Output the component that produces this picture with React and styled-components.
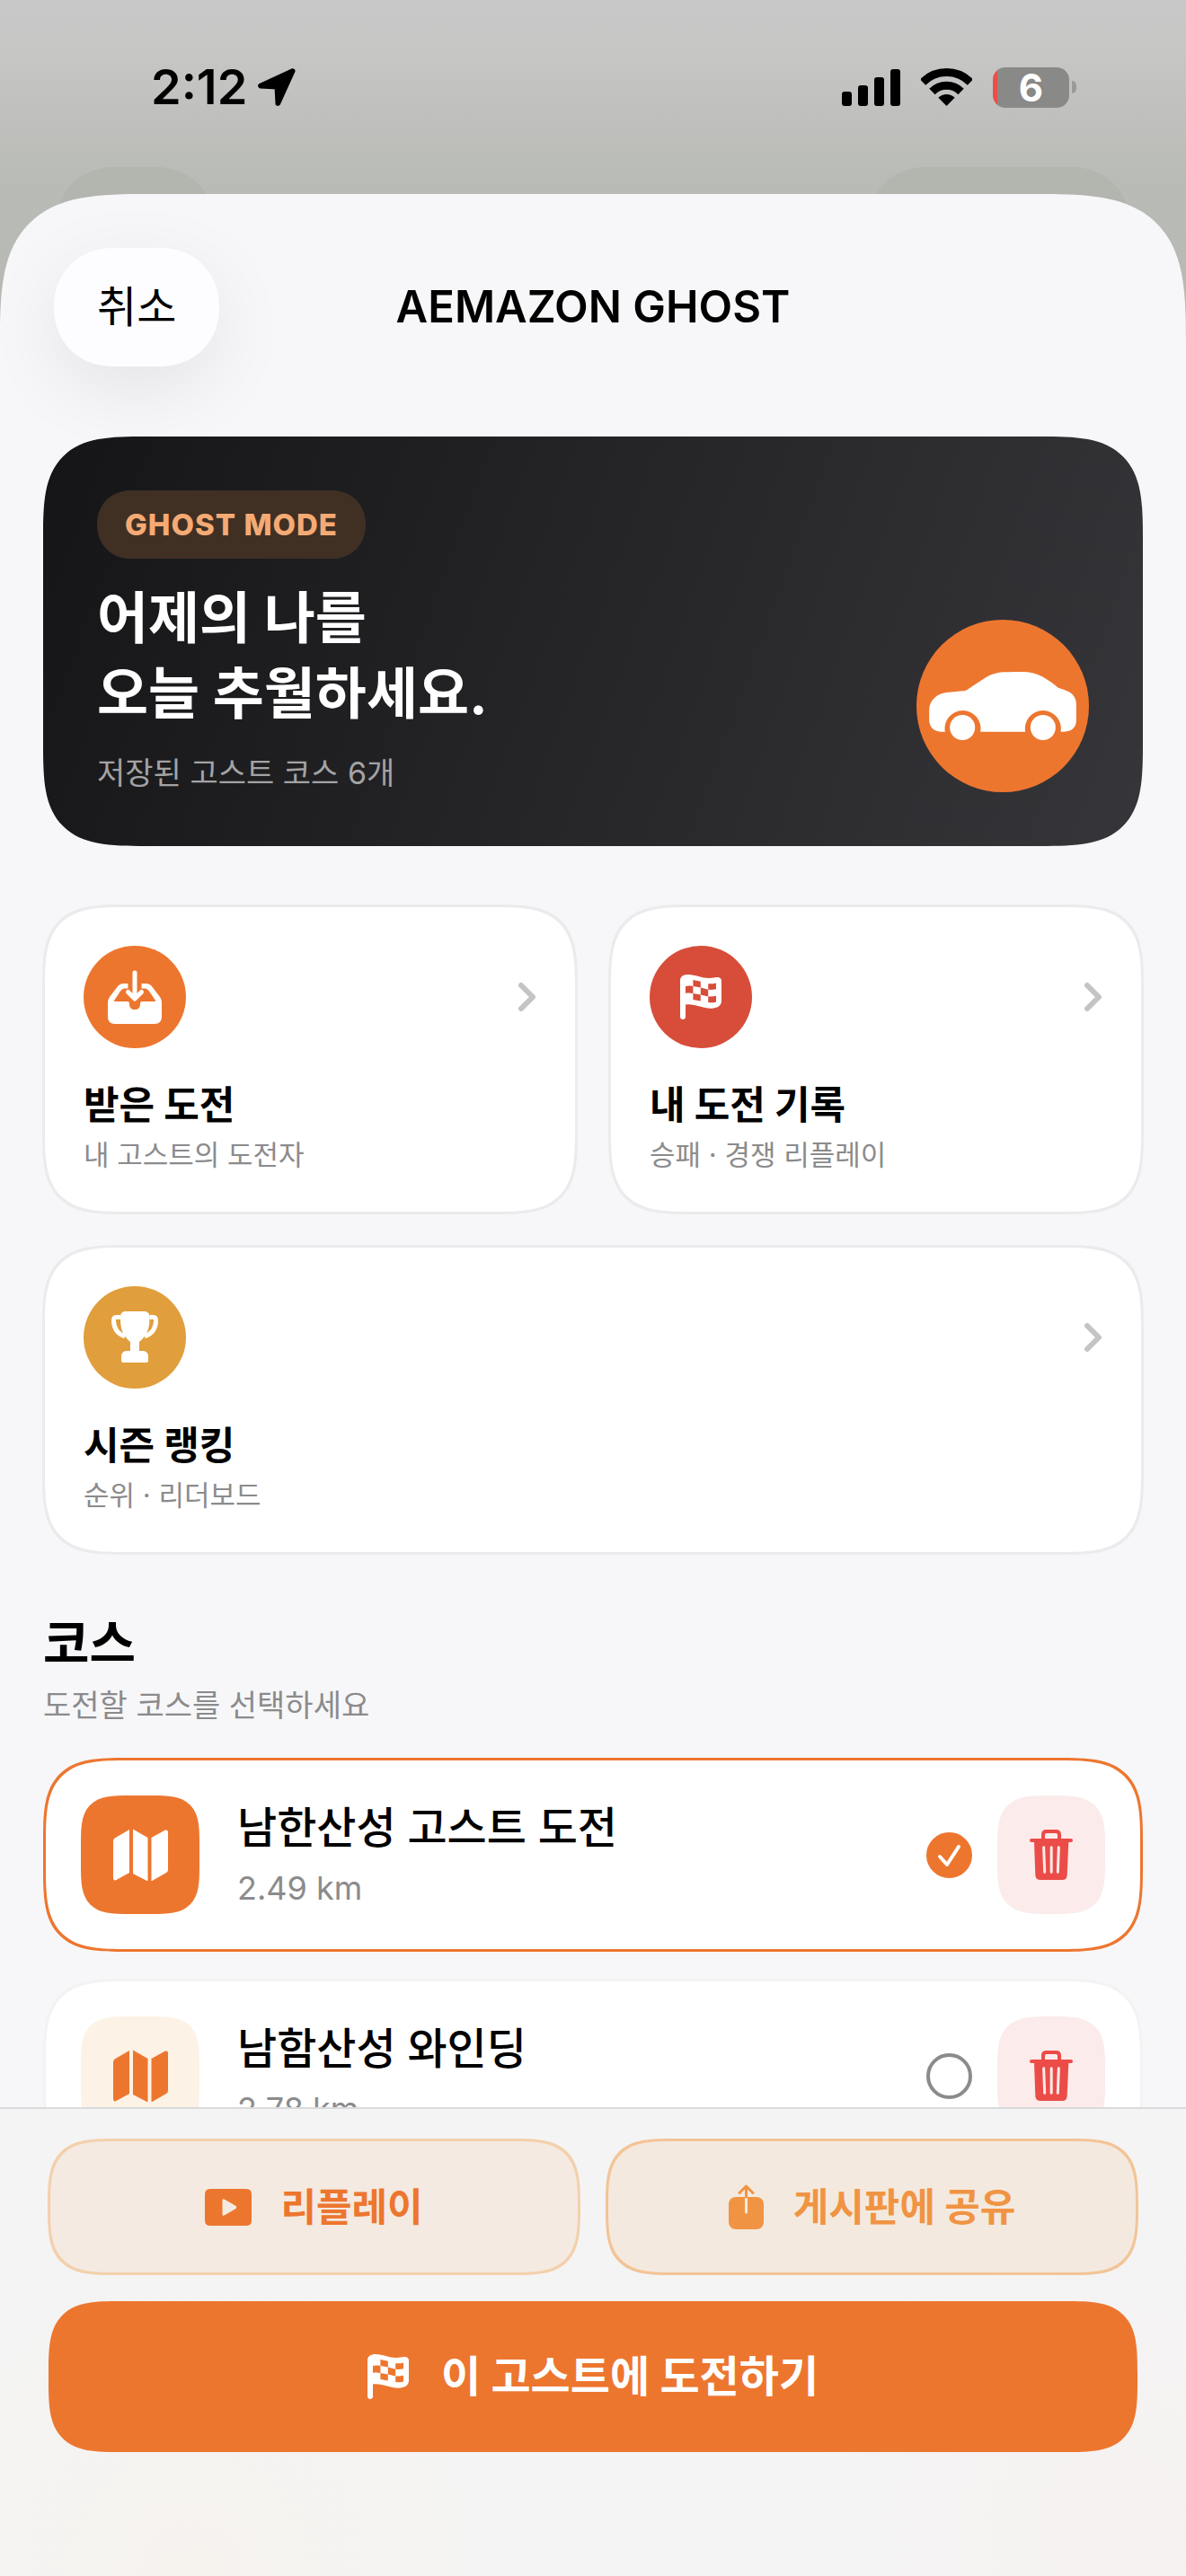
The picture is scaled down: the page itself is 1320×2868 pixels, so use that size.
import React, { useState } from "react";
import styled, { createGlobalStyle, css } from "styled-components";

const FLAG_PATH =
    "M35 40C35 35 39 33 44 33C52 33 60 37.5 68 37C71 36.8 73 36.5 76 36C79 36 81 37.5 81 40V62C81 67 78 69.5 72 70.5C62 72 52 65 41 66.5V80C41 84 35 84 35 80Z" +
    "M49.4 39V46C46 45.3 44 45.4 41 46V53.8C44 53.3 46 53.3 49.4 54V61L57.8 62.5V55.5L66.2 57.5V64C69 64.6 72 64.4 75 63.5V56.8C72 57.5 69 57.8 66.2 57.5V49.8C69 50 72 50 75 49.2V42.5C72 43.3 69 43.5 66.2 43.2V49.8L57.8 47.5V40.8ZM49.4 46L57.8 47.5V55.5L49.4 54Z";

const actions = [
    { id: "inbox", title: "받은 도전", note: "내 고스트의 도전자", color: "#ed762f", icon: <TrayIcon /> },
    { id: "history", title: "내 도전 기록", note: "승패 · 경쟁 리플레이", color: "#d74d3a", icon: <FlagIcon /> },
    { id: "ranking", title: "시즌 랭킹", note: "순위 · 리더보드", color: "#e19e3c", icon: <TrophyIcon />, wide: true },
];

const courses = [
    { id: "c1", name: "남한산성 고스트 도전", distance: "2.49 km" },
    { id: "c2", name: "남함산성 와인딩", distance: "2.78 km" },
];

function App() {
    const [selected, setSelected] = useState("c1");

    return (
        <Screen>
            <GlobalStyle />
            <StatusBar>
                <StatusGroup>
                    <Clock>2:12</Clock>
                    <LocationIcon />
                </StatusGroup>
                <StatusGroup $gap="23px">
                    <SignalIcon />
                    <WifiIcon />
                    <Battery>
                        <BatteryLevel>6</BatteryLevel>
                        <BatteryTip />
                    </Battery>
                </StatusGroup>
                <BackPills>
                    <BackPill $width="177px" />
                    <BackPill $width="292px" />
                </BackPills>
            </StatusBar>

            <Sheet>
                <SheetHeader>
                    <CancelButton type="button">취소</CancelButton>
                    <SheetTitle>AEMAZON GHOST</SheetTitle>
                </SheetHeader>

                <ScrollArea>
                    <Hero>
                        <HeroText>
                            <Badge>GHOST MODE</Badge>
                            <HeroTitle>
                                어제의 나를
                                <br />
                                오늘 추월하세요.
                            </HeroTitle>
                            <HeroNote>저장된 고스트 코스 6개</HeroNote>
                        </HeroText>
                        <CarCircle>
                            <CarIcon />
                        </CarCircle>
                    </Hero>

                    <ActionGrid>
                        {actions.map((action) => (
                            <ActionCard key={action.id} type="button" $wide={action.wide}>
                                <ActionTop>
                                    <ActionIcon $color={action.color}>{action.icon}</ActionIcon>
                                    <ChevronIcon />
                                </ActionTop>
                                <ActionTitle>{action.title}</ActionTitle>
                                <ActionNote>{action.note}</ActionNote>
                            </ActionCard>
                        ))}
                    </ActionGrid>

                    <SectionTitle>코스</SectionTitle>
                    <SectionNote>도전할 코스를 선택하세요</SectionNote>

                    <CourseList>
                        {courses.map((course) => {
                            const active = course.id === selected;
                            return (
                                <CourseRow key={course.id} $active={active}>
                                    <CourseLabel htmlFor={course.id}>
                                        <MapTile $active={active}>
                                            <MapIcon />
                                        </MapTile>
                                        <CourseText>
                                            <CourseName>{course.name}</CourseName>
                                            <CourseDistance>{course.distance}</CourseDistance>
                                        </CourseText>
                                    </CourseLabel>
                                    <RadioWrap>
                                        <Radio
                                            type="radio"
                                            name="course"
                                            id={course.id}
                                            checked={active}
                                            onChange={() => setSelected(course.id)}
                                        />
                                        {active && <CheckIcon />}
                                    </RadioWrap>
                                    <DeleteButton type="button" aria-label="삭제">
                                        <TrashIcon />
                                    </DeleteButton>
                                </CourseRow>
                            );
                        })}
                    </CourseList>
                </ScrollArea>

                <BottomBar>
                    <ButtonPair>
                        <SoftButton type="button">
                            <PlayIcon />
                            리플레이
                        </SoftButton>
                        <SoftButton type="button" $light>
                            <ShareIcon />
                            게시판에 공유
                        </SoftButton>
                    </ButtonPair>
                    <MainButton type="button">
                        <FlagIcon />
                        이 고스트에 도전하기
                    </MainButton>
                </BottomBar>
            </Sheet>
        </Screen>
    );
}

export default App;

/* icons */

function LocationIcon() {
    return (
        <svg width="42" height="42" viewBox="408 51 126 126" aria-hidden="true">
            <path d="M524 60L417 110L472 113L475 168Z" fill="#000" stroke="#000" strokeWidth="17" strokeLinejoin="round" />
        </svg>
    );
}

function SignalIcon() {
    return (
        <svg width="65" height="41" viewBox="0 0 65 41" aria-hidden="true">
            <rect x="0" y="25" width="11" height="16" rx="3" />
            <rect x="18" y="18" width="11" height="23" rx="3" />
            <rect x="36" y="9" width="11" height="32" rx="3" />
            <rect x="54" y="0" width="11" height="41" rx="3" />
        </svg>
    );
}

function WifiIcon() {
    return (
        <svg width="57" height="42" viewBox="315 45 171 126" aria-hidden="true">
            <path d="M321 91.5A112.5 112.5 0 0 1 480 91.5M352.4 123A68 68 0 0 1 448.6 123" fill="none" stroke="#000" strokeWidth="27" />
            <path d="M400.5 171L373 143.4A39 39 0 0 1 428 143.4Z" />
        </svg>
    );
}

function CarIcon() {
    return (
        <svg width="164" height="76" viewBox="402 324 491 228" fill="#fff" aria-hidden="true">
            <path d="M402 452C402 420 428 396 460 393L522 387C530 385 536 379 545 373L584 347C604 335 625 326 650 325C675 324 700 324 720 324C742 325 760 330 778 339C800 351 820 366 833 377C845 381 857 384 869 391C885 400 893 415 893 432V487C893 510 877 524 852 524H841A60 60 0 1 0 723 524H573A60 60 0 1 0 455 524H440C418 524 402 508 402 484Z" />
            <circle cx="513" cy="510" r="42" />
            <circle cx="782" cy="510" r="42" />
        </svg>
    );
}

function TrayIcon() {
    return (
        <svg width="60" height="60" viewBox="26 27 60 60" aria-hidden="true">
            <path
                d="M48.5 42H44C40 42 38 43.5 36 46.5L28 57C26.5 59.5 26 61 26 64V79C26 84 29 87 34 87H78C83 87 86 84 86 79V64C86 61 85.5 59.5 84 57L76 46.5C74 43.5 72 42 68 42H63.5V47.5H67C69 47.5 70.5 48.5 72 50.5L79 61C79.3 61.7 79 62 78 62H64C62.5 62 62 63 62 65C62 69 59.5 71 56 71C52.5 71 50 69 50 65C50 63 49.5 62 48 62H34C33 62 32.7 61.7 33 61L40 50.5C41.5 48.5 43 47.5 45 47.5H48.5Z"
                fill="#fff"
            />
            <path d="M56 30V58M48.5 51.5L56 59L63.5 51.5" fill="none" stroke="#fff" strokeWidth="5" strokeLinecap="round" strokeLinejoin="round" />
        </svg>
    );
}

function FlagIcon() {
    return (
        <svg width="46" height="50" viewBox="35 33 46 50" aria-hidden="true">
            <path d={FLAG_PATH} fill="#fff" fillRule="evenodd" />
        </svg>
    );
}

function TrophyIcon() {
    return (
        <svg width="52" height="58" viewBox="31 29 52 58" aria-hidden="true">
            <path
                d="M41 36C41 31 43 29 47 29H67C71.5 29 73.5 31 73.5 36C73.5 50 70 56 62 63V73H66C70 73 72 76 72 79V84C72 85 71 86 70 86H44C43 86 42 85 42 84V79C42 76 44 73 48 73H52V63C44 56 41 50 41 36Z"
                fill="#fff"
            />
            <path
                d="M41 35.5H36.5C34 35.5 33.5 37 33.5 39C33.5 48 38 54 46 57M73.5 35.5H77.5C80 35.5 80.5 37 80.5 39C80.5 48 76 54 68 57"
                fill="none"
                stroke="#fff"
                strokeWidth="5"
            />
        </svg>
    );
}

function ChevronIcon() {
    return (
        <svg width="20" height="34" viewBox="0 0 20 34" aria-hidden="true">
            <path d="M3 4L16 17L3 30" fill="none" stroke="#c4c4c5" strokeWidth="6" strokeLinecap="round" strokeLinejoin="round" />
        </svg>
    );
}

function MapIcon() {
    return (
        <svg width="61" height="58" viewBox="35 37 61 58" fill="currentColor" aria-hidden="true">
            <path d="M53 38V86L38.5 94C36.5 95 35 94 35 92V51C35 49 36 48 37.5 47Z" />
            <path d="M57 37.5L73.5 47V95.5L57 87Z" />
            <path d="M77.5 47L92 39C94 38 96 38.5 96 41V82C96 84 95.5 85 94 86L77.5 95.5Z" />
        </svg>
    );
}

function CheckIcon() {
    return (
        <svg width="51" height="51" viewBox="0 0 51 51" aria-hidden="true">
            <path d="M15 27L23 36L36 16" fill="none" stroke="#fff" strokeWidth="4" strokeLinecap="round" strokeLinejoin="round" />
        </svg>
    );
}

function TrashIcon() {
    return (
        <svg width="48" height="56" viewBox="618 318 144 168" aria-hidden="true">
            <path d="M663 352V335Q663 324 674 324H706Q717 324 717 335V352" fill="none" stroke="#eb4c48" strokeWidth="12" />
            <rect x="618" y="348" width="144" height="12" rx="6" fill="#eb4c48" />
            <path d="M633 358H748L743 470Q742 486 727 486H654Q638 486 637 470Z" fill="#eb4c48" />
            <path d="M665 377L668 460M690.5 377V460M715 377L712 460" stroke="#fbebeb" strokeWidth="9" strokeLinecap="round" />
        </svg>
    );
}

function PlayIcon() {
    return (
        <svg width="52" height="41" viewBox="0 0 52 41" aria-hidden="true">
            <path
                d="M6 0H46Q52 0 52 6V35Q52 41 46 41H6Q0 41 0 35V6Q0 0 6 0ZM19.5 12.5V28.5Q19.5 30.5 21.5 29.5L34.5 22Q36 20.5 34.5 19L21.5 11.5Q19.5 10.5 19.5 12.5Z"
                fill="#ed762f"
                fillRule="evenodd"
            />
        </svg>
    );
}

function ShareIcon() {
    return (
        <svg width="40" height="50" viewBox="0 0 40 50" aria-hidden="true">
            <rect x="0" y="14" width="39" height="36" rx="8" fill="#f09443" />
            <path d="M19.5 14V31" stroke="#f4e9de" strokeWidth="3" strokeLinecap="round" />
            <path d="M19.5 14V2M12 9.5L19.5 2L27 9.5" fill="none" stroke="#f09443" strokeWidth="3" strokeLinecap="round" strokeLinejoin="round" />
        </svg>
    );
}

/* styles */

const GlobalStyle = createGlobalStyle`
    * {
        box-sizing: border-box;
    }

    body {
        margin: 0;
        font-family: Inter, "Noto Sans CJK KR", sans-serif;
        color: #000;
        background: #b8bab5;
    }

    button {
        font-family: inherit;
        color: inherit;
        border: 0;
        padding: 0;
        cursor: pointer;
    }

    svg {
        display: block;
        flex: none;
    }

    h1, h2, p {
        margin: 0;
    }
`;

// continuous corners where the browser has them, plain round ones elsewhere
const smooth = (radius, extent) => css`
    border-radius: ${radius}px;

    @supports (corner-shape: squircle) {
        border-radius: ${extent}px;
        corner-shape: superellipse(1.68);
    }
`;

const pill = css`
    border-radius: 66px;
    corner-shape: superellipse(1.08);
`;

const Screen = styled.div`
    display: flex;
    flex-direction: column;
    height: 100vh;
    background: linear-gradient(#c8c8c8 0, #c6c6c5 60px, #b9bbb6 200px, #b6b9b2 400px);
    overflow: hidden;
`;

const StatusBar = styled.header`
    position: relative;
    display: flex;
    justify-content: space-between;
    align-items: flex-start;
    height: 216px;
    padding: 72px 122px 0 168px;
    flex: none;
`;

const StatusGroup = styled.div`
    display: flex;
    align-items: center;
    gap: ${(props) => props.$gap || "12px"};
    height: 50px;
`;

const Clock = styled.span`
    font-size: 54px;
    font-weight: 600;
    line-height: 50px;
`;

const Battery = styled.div`
    display: flex;
    align-items: center;
    gap: 3px;
`;

const BatteryLevel = styled.span`
    width: 85px;
    height: 45px;
    border-radius: 14px;
    background: linear-gradient(90deg, #eb4e48 5px, #898987 5px);
    color: #fff;
    font-size: 42px;
    font-weight: 700;
    line-height: 45px;
    text-align: center;
`;

const BatteryTip = styled.span`
    width: 5px;
    height: 14px;
    border-radius: 0 5px 5px 0;
    background: #9b9b99;
`;

const BackPills = styled.div`
    position: absolute;
    top: 186px;
    left: 0;
    right: 0;
    display: flex;
    justify-content: space-between;
    padding: 0 62px;
`;

const BackPill = styled.span`
    width: ${(props) => props.$width};
    height: 132px;
    background: #b3b5af;
    ${pill}
`;

const Sheet = styled.main`
    position: relative;
    display: flex;
    flex-direction: column;
    flex: 1;
    min-height: 0;
    background: #f7f7f9;
    overflow: hidden;
    border-radius: 114px 114px 0 0;

    @supports (corner-shape: squircle) {
        border-radius: 168px 168px 0 0;
        corner-shape: superellipse(1.68);
    }
`;

const SheetHeader = styled.div`
    display: grid;
    grid-template-columns: 1fr auto 1fr;
    align-items: center;
    padding: 60px 60px 0;
    flex: none;
`;

const CancelButton = styled.button`
    justify-self: start;
    height: 132px;
    padding: 0 48px;
    background: #fdfdff;
    box-shadow: 0 24px 84px rgba(0, 0, 0, 0.08);
    font-size: 48px;
    font-weight: 400;
    line-height: 60px;
    ${pill}
`;

const SheetTitle = styled.h1`
    font-size: 49px;
    font-weight: 600;
    line-height: 60px;
`;

const ScrollArea = styled.div`
    flex: 1;
    min-height: 0;
    padding: 78px 48px 48px;
    overflow-y: auto;
    scrollbar-width: none;
`;

const Hero = styled.section`
    display: flex;
    justify-content: space-between;
    align-items: flex-end;
    padding: 60px;
    background: linear-gradient(110deg, #151517, #36363a);
    color: #fff;
    ${smooth(76, 114)}
`;

const HeroText = styled.div`
    display: flex;
    flex-direction: column;
    align-items: flex-start;
    gap: 25px;
`;

const Badge = styled.span`
    padding: 0 31px;
    background: #403024;
    color: #f5aa74;
    font-size: 33px;
    font-weight: 800;
    line-height: 76px;
    letter-spacing: 1px;
    ${pill}
`;

const HeroTitle = styled.h2`
    font-size: 62px;
    font-weight: 700;
    line-height: 84px;
`;

const HeroNote = styled.p`
    color: #a3a3a5;
    font-size: 34px;
    line-height: 42px;
`;

const CarCircle = styled.div`
    display: grid;
    place-items: center;
    width: 192px;
    height: 192px;
    border-radius: 50%;
    background: #ed762f;
`;

const ActionGrid = styled.div`
    display: grid;
    grid-template-columns: 1fr 1fr;
    gap: 34px;
    margin: 65px -1px 0;
`;

const ActionCard = styled.button`
    display: flex;
    flex-direction: column;
    grid-column: ${(props) => (props.$wide ? "1 / -1" : "auto")};
    padding: 43px;
    border: 3px solid #ebebed;
    background: #fff;
    text-align: left;
    ${smooth(62, 94)}
`;

const ActionTop = styled.span`
    display: flex;
    align-items: center;
    justify-content: space-between;
`;

const ActionIcon = styled.span`
    display: grid;
    place-items: center;
    width: 114px;
    height: 114px;
    border-radius: 50%;
    background: ${(props) => props.$color};
`;

const ActionTitle = styled.span`
    margin-top: 38px;
    font-size: 43px;
    font-weight: 700;
    line-height: 50px;
`;

const ActionNote = styled.span`
    margin-top: 10px;
    color: #8b8b8d;
    font-size: 31px;
    line-height: 41px;
`;

const SectionTitle = styled.h2`
    margin-top: 69px;
    font-size: 56px;
    font-weight: 700;
    line-height: 60px;
`;

const SectionNote = styled.p`
    margin-top: 17px;
    color: #8b8b8d;
    font-size: 34px;
    line-height: 44px;
`;

const CourseList = styled.div`
    display: flex;
    flex-direction: column;
    gap: 30px;
    margin-top: 36px;
`;

const CourseRow = styled.div`
    display: flex;
    align-items: center;
    gap: 28px;
    padding: 39px;
    border: 3px solid ${(props) => (props.$active ? "#ed762f" : "#f3f3f4")};
    background: #fff;
    ${smooth(62, 94)}
`;

const CourseLabel = styled.label`
    display: flex;
    align-items: center;
    gap: 42px;
    flex: 1;
    cursor: pointer;
`;

const MapTile = styled.span`
    display: grid;
    place-items: center;
    width: 132px;
    height: 132px;
    background: ${(props) => (props.$active ? "#ed762f" : "#fdf2e6")};
    color: ${(props) => (props.$active ? "#fff" : "#ed762f")};
    ${smooth(36, 54)}
`;

const CourseText = styled.span`
    display: flex;
    flex-direction: column;
    gap: 16px;
`;

const CourseName = styled.span`
    font-size: 48px;
    font-weight: 500;
    line-height: 58px;
`;

const CourseDistance = styled.span`
    color: #8b8b8d;
    font-size: 36px;
    line-height: 44px;
`;

const RadioWrap = styled.span`
    display: grid;

    > * {
        grid-area: 1 / 1;
    }

    svg {
        pointer-events: none;
    }
`;

const Radio = styled.input`
    appearance: none;
    width: 51px;
    height: 51px;
    margin: 0;
    border: 4px solid #8b8b8d;
    border-radius: 50%;

    &:checked {
        border-color: #ed762f;
        background: #ed762f;
    }
`;

const DeleteButton = styled.button`
    display: grid;
    place-items: center;
    width: 120px;
    height: 132px;
    background: #fbebeb;
    ${smooth(38, 58)}
`;

const BottomBar = styled.footer`
    display: flex;
    flex-direction: column;
    gap: 29px;
    flex: none;
    padding: 33px 54px 138px;
    border-top: 2px solid #d9dadb;
    background:
        radial-gradient(circle at 16% 100%, rgba(247, 242, 236, 0.7), transparent 360px),
        radial-gradient(circle at 94% 90%, rgba(247, 240, 240, 0.7), transparent 360px),
        #f4f4f4;
`;

const ButtonPair = styled.div`
    display: grid;
    grid-template-columns: 1fr 1fr;
    gap: 28px;
    margin: 0 -1px;
`;

const SoftButton = styled.button`
    display: flex;
    align-items: center;
    justify-content: center;
    gap: 32px;
    height: 152px;
    border: 3px solid ${(props) => (props.$light ? "#f3c497" : "#f3d0ac")};
    background: ${(props) => (props.$light ? "#f4e9de" : "#f4eae1")};
    color: ${(props) => (props.$light ? "#f09443" : "#ed762f")};
    font-size: 43px;
    font-weight: 700;
    line-height: 50px;
    ${smooth(54, 80)}
`;

const MainButton = styled.button`
    display: flex;
    align-items: center;
    justify-content: center;
    gap: 36px;
    height: 168px;
    background: #ed762f;
    color: #fff;
    font-size: 48px;
    font-weight: 700;
    line-height: 60px;
    ${smooth(54, 80)}
`;
